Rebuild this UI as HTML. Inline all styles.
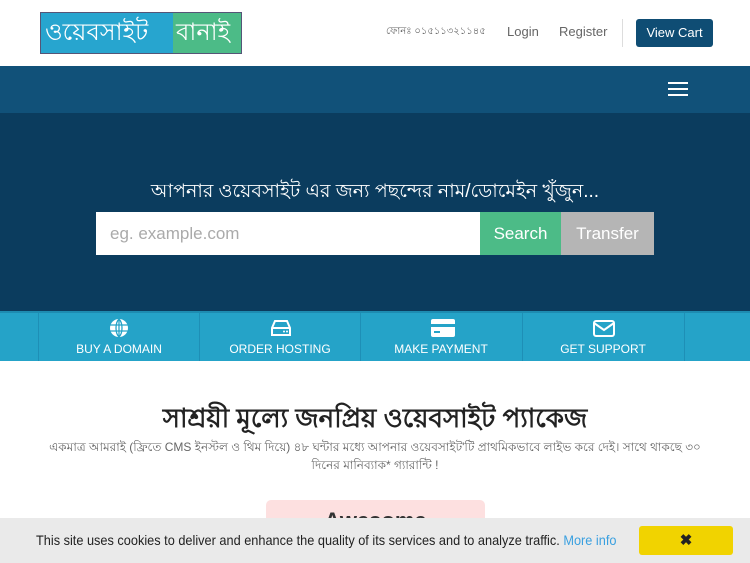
<!DOCTYPE html>
<html><head><meta charset="utf-8"><style>
*{box-sizing:border-box;margin:0;padding:0}
body{width:750px;height:563px;overflow:hidden;font-family:"Liberation Sans",sans-serif;background:#fff;position:relative}
.hdr{height:66px;position:relative}
.logo{position:absolute;left:40px;top:12px;width:202px;height:42px;border:1px solid #557;display:flex;font-size:24px;color:#fff;line-height:40px}
.logo .a{background:#27a5cf;width:132px;padding-left:4px}
.logo .b{background:#4cbb87;flex:1;color:#fff;padding-left:3px}
.t{position:absolute;top:24px;font-size:13px;color:#666}
.cart{position:absolute;left:636px;top:19px;width:77px;height:28px;background:#0f4d74;border-radius:3px;color:#fff;font-size:13px;line-height:28px;text-align:center}
.sep{position:absolute;left:622px;top:19px;width:1px;height:28px;background:#ddd}
.nav{height:47px;background:#115179;position:relative}
.burger{position:absolute;left:668px;top:82px;width:20px}
.burger i{display:block;height:2px;background:#fff;margin-bottom:4px}
.hero{height:198px;background:#0b3c5e;position:relative}
.hero h2{position:absolute;top:64px;width:100%;text-align:center;color:#fff;font-size:19px;font-weight:normal}
.inp{position:absolute;left:96px;top:99px;width:384px;height:43px;background:#fff;color:#aaa;font-size:17px;line-height:43px;padding-left:14px}
.s{position:absolute;left:480px;top:99px;width:81px;height:43px;background:#4cbb87;color:#fff;font-size:17px;line-height:43px;text-align:center}
.tr{position:absolute;left:561px;top:99px;width:93px;height:43px;background:#b5b5b5;color:#fff;font-size:17px;line-height:43px;text-align:center}
.bar{height:50px;background:#25a3c8;position:relative;border-top:2px solid #1e8cb1}
.it{position:absolute;top:0;width:161px;height:48px;border-left:1px solid #1e8fb6;color:#fff;font-size:12px;text-align:center}
.it span{position:absolute;top:29px;left:0;right:0}
.it svg{position:absolute;top:5px;left:70px}
h1{position:absolute;top:398px;width:100%;text-align:center;font-size:26px;color:#222}
.p{position:absolute;top:438px;left:45px;width:660px;text-align:center;font-size:12px;color:#666;line-height:18px}
.card{position:absolute;left:266px;top:500px;width:219px;height:40px;background:#fde0e0;border-radius:5px;text-align:center;font-size:22px;font-weight:bold;color:#333;padding-top:8px}
.ck{position:absolute;left:0;top:518px;width:750px;height:45px;background:#eaeaea;font-size:14px;color:#222;line-height:45px}
.ck .m{position:absolute;left:36px;top:0;white-space:nowrap;transform:scaleX(0.91);transform-origin:0 50%}
.ck a{color:#3aa0e0}
.x{position:absolute;left:639px;top:8px;width:94px;height:29px;background:#f1d300;border-radius:3px;line-height:29px;text-align:center;font-weight:bold;font-size:15px}
</style></head><body>
<div class="hdr">
<div class="logo"><div class="a">ওয়েবসাইট</div><div class="b">বানাই</div></div>
<div class="t" style="left:386px;font-size:10px">ফোনঃ ০১৫১১৩২১১৪৫</div>
<div class="t" style="left:507px">Login</div>
<div class="t" style="left:559px">Register</div>
<div class="sep"></div>
<div class="cart">View Cart</div>
</div>
<div class="nav"></div>
<div class="burger"><i></i><i></i><i></i></div>
<div class="hero">
<h2>আপনার ওয়েবসাইট এর জন্য পছন্দের নাম/ডোমেইন খুঁজুন...</h2>
<div class="inp">eg. example.com</div><div class="s">Search</div><div class="tr">Transfer</div>
</div>
<div class="bar">
<div class="it" style="left:38px"><svg width="20" height="20" viewBox="0 0 20 20"><circle cx="10" cy="10" r="9" fill="#fff"/><path d="M1 7H19M1 13H19M10 1V19M10 1C6 5 6 15 10 19M10 1C14 5 14 15 10 19" stroke="#25a3c8" stroke-width="1.3" fill="none"/></svg><span>BUY A DOMAIN</span></div>
<div class="it" style="left:199px"><svg width="22" height="20" viewBox="0 0 22 20"><path d="M2 10L5 3H17L20 10V17H2Z" fill="none" stroke="#fff" stroke-width="2"/><path d="M2 10H20" stroke="#fff" stroke-width="2"/><circle cx="14" cy="13.5" r="1" fill="#fff"/><circle cx="17" cy="13.5" r="1" fill="#fff"/></svg><span>ORDER HOSTING</span></div>
<div class="it" style="left:360px"><svg width="24" height="20" viewBox="0 0 24 20"><rect x="0" y="1" width="24" height="18" rx="2" fill="#fff"/><rect x="0" y="6" width="24" height="3" fill="#25a3c8"/><rect x="3" y="13" width="6" height="2" fill="#25a3c8"/></svg><span>MAKE PAYMENT</span></div>
<div class="it" style="left:522px"><svg width="22" height="20" viewBox="0 0 22 20"><rect x="1" y="3" width="20" height="15" rx="2" fill="none" stroke="#fff" stroke-width="2"/><path d="M1 5L11 12L21 5" fill="none" stroke="#fff" stroke-width="2"/></svg><span>GET SUPPORT</span></div>
<div class="it" style="left:684px;width:66px"></div>
</div>
<h1>সাশ্রয়ী মূল্যে জনপ্রিয় ওয়েবসাইট প্যাকেজ</h1>
<div class="p">একমাত্র আমরাই (ফ্রিতে CMS ইনস্টল ও থিম দিয়ে) ৪৮ ঘন্টার মধ্যে আপনার ওয়েবসাইট'টি প্রাথমিকভাবে লাইভ করে দেই। সাথে থাকছে ৩০ দিনের মানিব্যাক* গ্যারান্টি !</div>
<div class="card">Awesome</div>
<div class="ck"><div class="m">This site uses cookies to deliver and enhance the quality of its services and to analyze traffic. <a>More info</a></div><div class="x">✖</div></div>
</body></html>
